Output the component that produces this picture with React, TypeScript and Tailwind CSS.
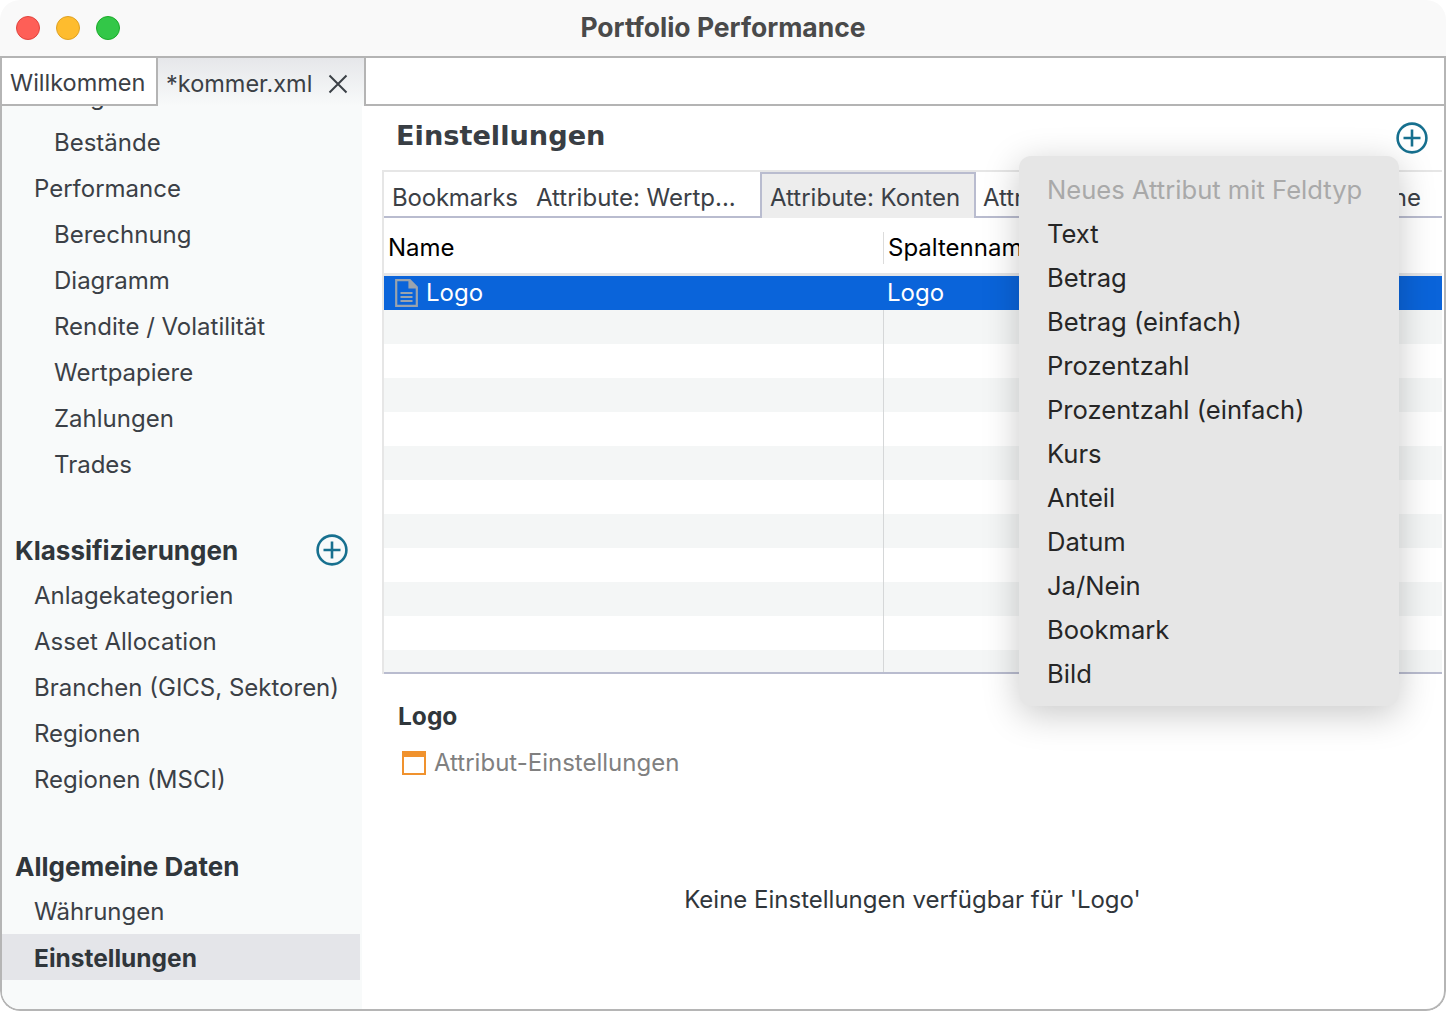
const FONT = "font-['Inter','Noto_Sans',sans-serif]";

function PlusCircle({ size = 32 }: { size?: number }) {
  return (
    <svg width={size} height={size} viewBox="0 0 32 32" fill="none" stroke="#17708f" strokeWidth="2.6">
      <circle cx="16" cy="16" r="14.4" />
      <path d="M16 7.5v17M7.5 16h17" />
    </svg>
  );
}

function DocIcon() {
  return (
    <svg width="23" height="28" viewBox="0 0 23 28" fill="none" stroke="#9aa3ad" strokeWidth="2.2">
      <path d="M1.2 1.2h13.6l7 7v18.6h-20.600z" fill="#0a64da" />
      <path d="M14.800 1.200v7h7z" fill="#9aa3ad" stroke="none" />
      <path d="M14.500 1.500v7h7" />
      <path d="M5.500 14h12M5.500 18h12M5.500 22h12" strokeWidth="1.8" />
    </svg>
  );
}

function NavItem({ label, indent = false, active = false }: { label: string; indent?: boolean; active?: boolean }) {
  return (
    <div
      className={
        active
          ? 'h-[46px] flex items-center w-[358px] pt-[2px] bg-[#e4e5e9] pl-[32px] font-bold text-[24.5px] text-[#30363b]'
          : indent
            ? 'h-[46px] flex items-center pt-[2px] pl-[52px] text-[#3b4046]'
            : 'h-[46px] flex items-center pt-[2px] pl-[32px] text-[#3b4046]'
      }
    >
      {label}
    </div>
  );
}

function Sidebar() {
  return (
    <div className="w-[360px] shrink-0 bg-[#f8fafa] overflow-hidden text-[24px]">
      <div className="mt-[-33px]">
        <NavItem label="Wag" indent />
        <NavItem label="Bestände" indent />
        <NavItem label="Performance" />
        {['Berechnung', 'Diagramm', 'Rendite / Volatilität', 'Wertpapiere', 'Zahlungen', 'Trades'].map((l) => (
          <NavItem key={l} label={l} indent />
        ))}
      </div>
      <div className="mt-[41px] h-[44px] flex items-center justify-between pl-[13px] pr-[14px] font-bold text-[26px] text-[#30363b]">
        <span>Klassifizierungen</span>
        <PlusCircle />
      </div>
      {['Anlagekategorien', 'Asset Allocation', 'Branchen (GICS, Sektoren)', 'Regionen', 'Regionen (MSCI)'].map((l) => (
        <NavItem key={l} label={l} />
      ))}
      <div className="mt-[42px] h-[44px] flex items-center pl-[13px] font-bold text-[26px] text-[#30363b]">
        Allgemeine Daten
      </div>
      <NavItem label="Währungen" />
      <NavItem label="Einstellungen" active />
    </div>
  );
}

function TableBody() {
  const rows = Array.from({ length: 11 });
  return (
    <div className="relative h-[398px] flex flex-col overflow-hidden border-b-2 border-[#b9bccf]">
      <div className="h-[34px] shrink-0 bg-[#0a64da] text-white flex items-center text-[24px]">
        <div className="w-[499px] pl-[11px] flex items-center gap-[8px]">
          <DocIcon />
          <span>Logo</span>
        </div>
        <div className="pl-[4px]">Logo</div>
      </div>
      {rows.map((_, i) => (
        <div key={i} className={i % 2 === 0 ? 'h-[34px] shrink-0 bg-[#f4f6f6]' : 'h-[34px] shrink-0 bg-white'} />
      ))}
      <div className="absolute left-[499px] top-[34px] bottom-0 w-[1px] bg-[#d5d7d8]" />
    </div>
  );
}

function Folder() {
  return (
    <div className="ml-[20px] mr-[2px] mt-[10px] border-l-2 border-t-2 border-[#e6e6e6]">
      <div className="relative h-[46px] flex items-stretch border-b-2 border-[#b9bccf] text-[24px] text-[#3b4046]">
        <div className="pl-[8px] pt-[8px] flex items-center w-[152px] tracking-[-0.2px]">Bookmarks</div>
        <div className="pt-[8px] flex items-center w-[224px]">Attribute: Wertp...</div>
        <div className="w-[216px] bg-[#ededed] border-2 border-b-0 border-[#b9bccf] flex items-center pt-[4px] pl-[8px] h-[46px]">
          Attribute: Konten
        </div>
        <div className="pl-[7px] pt-[8px] flex items-center w-[60px] overflow-hidden">Attr</div>
        <div className="ml-auto pt-[8px] pr-[21px] flex items-center">ne</div>
      </div>
      <div className="h-[58px] flex items-center pt-[4px] border-b-[3px] border-[#e4e5e7] text-[24px] text-black">
        <div className="w-[499px] pl-[4px] flex items-center h-full">Name</div>
        <div className="h-[32px] w-[1px] bg-[#dcdcdc]" />
        <div className="pl-[4px] whitespace-nowrap">Spaltennam</div>
      </div>
      <TableBody />
    </div>
  );
}

function Menu() {
  const items = ['Text', 'Betrag', 'Betrag (einfach)', 'Prozentzahl', 'Prozentzahl (einfach)', 'Kurs', 'Anteil', 'Datum', 'Ja/Nein', 'Bookmark', 'Bild'];
  return (
    <div className="absolute left-[1019px] top-[156px] w-[380px] h-[550px] rounded-[12px] bg-[#e6e6e6] shadow-[0_8px_36px_rgba(0,0,0,0.22)] pt-[12px] pl-[28px] text-[25.6px] text-[#262626]">
      <div className="h-[44px] flex items-center text-[#a9a9a9]">Neues Attribut mit Feldtyp</div>
      {items.map((l) => (
        <div key={l} className="h-[44px] flex items-center">{l}</div>
      ))}
    </div>
  );
}

export default function App() {
  return (
    <div className={`${FONT} relative w-[1446px] h-[1012px] bg-white overflow-hidden`}>
      <div className="w-full h-[1011px] rounded-[20px] overflow-hidden flex flex-col bg-white">
        <div className="h-[58px] shrink-0 bg-[#f9f9f9] border-b-2 border-[#b4b4b4] relative flex items-center justify-center">
          <div className="absolute left-[16px] top-[16px] flex gap-[16px]">
            <div className="w-[24px] h-[24px] rounded-full bg-[#fe5f57] border border-[#e0443e]" />
            <div className="w-[24px] h-[24px] rounded-full bg-[#febc2e] border border-[#dea123]" />
            <div className="w-[24px] h-[24px] rounded-full bg-[#33c748] border border-[#1aab29]" />
          </div>
          <span className="font-bold text-[26.5px] text-[#4a4a4a]">Portfolio Performance</span>
        </div>
        <div className="flex-1 min-h-0 flex flex-col border-x-2 border-b-2 border-[#b5b5b5] rounded-b-[20px] overflow-hidden">
          <div className="h-[48px] shrink-0 flex bg-white text-[23.500px] text-[#3b4046]">
            <div className="w-[156px] flex items-center pt-[4px] pl-[8px] border-r-2 border-b-2 border-[#b4b4b4] bg-white whitespace-nowrap">
              Willkommen
            </div>
            <div className="w-[208px] flex items-center pt-[4px] pl-[8px] border-r-2 border-[#b4b4b4] bg-gradient-to-b from-[#e6e7ea] to-[#f8fafa] whitespace-nowrap">
              <span>*kommer.xml</span>
              <svg width="20" height="20" viewBox="0 0 20 20" stroke="#3b4046" strokeWidth="2" className="ml-[16px]">
                <path d="M1.500 1.500l17 17M18.500 1.500l-17 17" />
              </svg>
            </div>
            <div className="flex-1 border-b-2 border-[#b4b4b4]" />
          </div>
          <div className="flex-1 flex min-h-0">
            <Sidebar />
            <div className="flex-1 flex flex-col min-w-0">
              <div className="h-[46px] mt-[8px] flex items-center justify-between pl-[34px] pr-[16px]">
                <span className="font-['DejaVu_Sans',sans-serif] font-bold text-[27.2px] text-[#393e44] mt-[-2px]">Einstellungen</span>
                <span className="mt-[2px]"><PlusCircle /></span>
              </div>
              <Folder />
              <div className="pl-[36px] pt-[25px] text-[24px]">
                <div className="font-bold text-[24.5px] text-[#30363b] h-[34px] flex items-center">Logo</div>
                <div className="mt-[12px] ml-[4px] flex items-center gap-[8px] text-[#808080]">
                  <div className="w-[24px] h-[24px] border-2 border-t-[6px] border-[#f0922e]" />
                  <span>Attribut-Einstellungen</span>
                </div>
              </div>
              <div className="mt-[101px] pl-[19px] text-center text-[24px] text-[#30363b]">Keine Einstellungen verfügbar für 'Logo'</div>
            </div>
          </div>
        </div>
      </div>
      <Menu />
    </div>
  );
}
